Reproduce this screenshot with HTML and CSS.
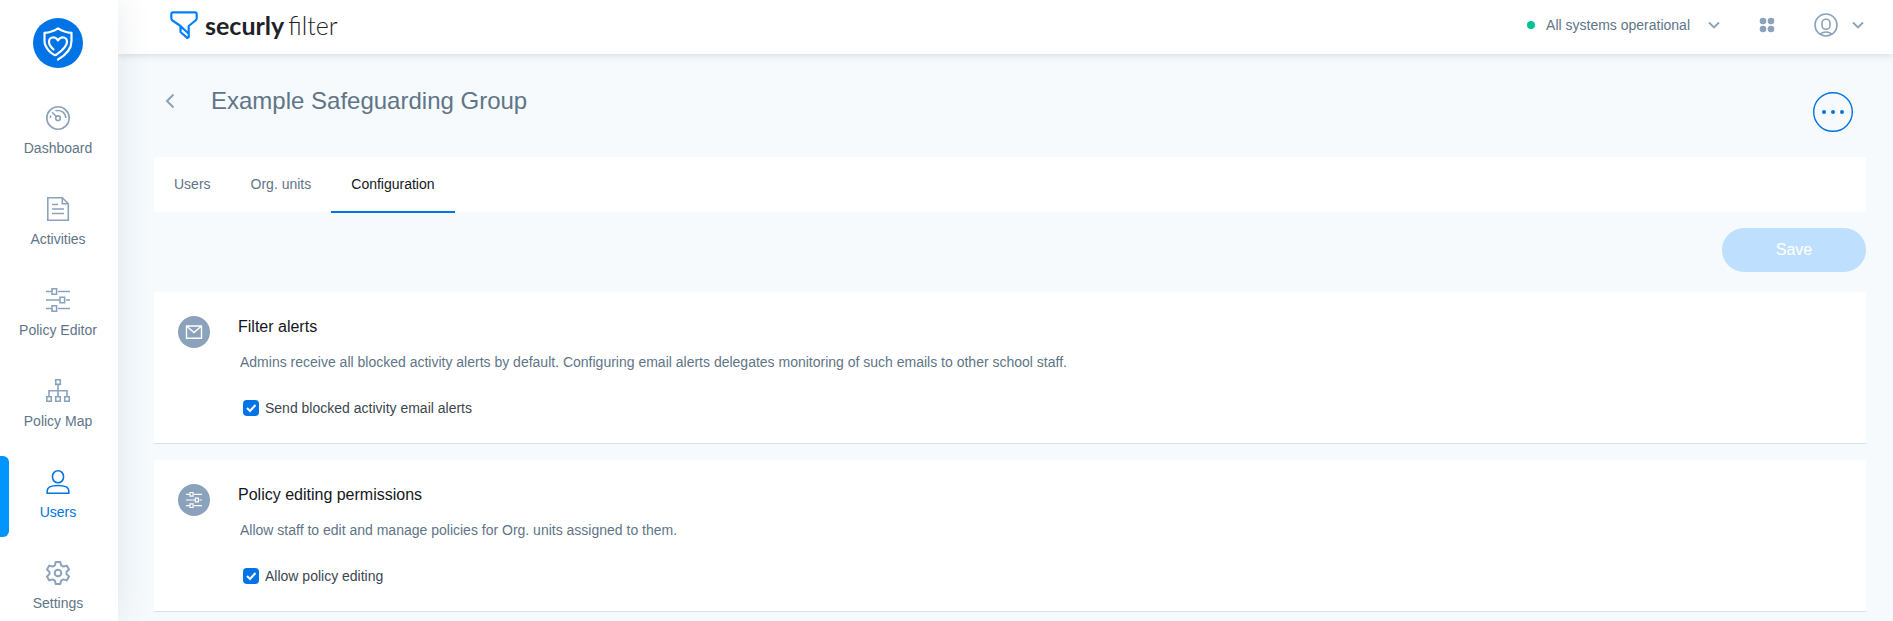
FILE: index.html
```html
<!DOCTYPE html>
<html lang="en">
<head>
    <meta charset="UTF-8">
    <meta name="viewport" content="width=device-width, initial-scale=1.0">
    <title>Securly Filter - Example Safeguarding Group</title>
    <link rel="stylesheet" href="styles.css">
</head>
<body>

    <svg class="symbols" aria-hidden="true">
        <symbol id="icon-sliders" viewBox="0 0 24 24">
            <path d="M0 3.5h5.5M12 3.5h12M0 12h13.5M20 12h4M0 20.5h5.5M12 20.5h12"/>
            <path d="M6 .7h4.600v5.600H6zM14 9.200h4.600v5.600H14zM6 17.700h4.600v5.600H6z"/>
        </symbol>
        <symbol id="icon-chevron" viewBox="0 0 12 8">
            <path d="M1 1.5l5 5 5-5"/>
        </symbol>
    </svg>

    <div class="app">
        <aside class="sidebar">
            <a href="#" class="brand" aria-label="Securly home">
                <svg width="50" height="50" viewBox="0 0 50 50">
                    <circle cx="25" cy="25" r="25" fill="#0073e6"/>
                    <g fill="none" stroke="#fff" stroke-width="2.2" stroke-linecap="round" stroke-linejoin="round">
                        <path d="M20.5 31.5c-2.600-2.300-4.500-4.600-4.500-7.700 0-2.800 1.900-4.500 4.200-4.500 2 0 3.600 1.100 4.800 3 1.200-1.900 2.800-3 4.800-3 2.300 0 4.200 1.700 4.200 4.500 0 5-5.500 9.200-9.800 12.400-.8.600-1.600 1-2.300 1-2-.9-10.400-6.500-10.400-14.200v-8.200c5-.3 9.500-1.900 13.500-4.500 4 2.600 8.500 4.200 13.500 4.500v8.200c0 8-6.500 14.500-13.500 18.500"/>
                    </g>
                </svg>
            </a>

            <nav class="menu">
                <a href="#" class="menu-item">
                    <svg class="icon" viewBox="0 0 24 24">
                        <circle cx="12" cy="12" r="11.2"/>
                        <circle cx="12" cy="12.200" r="2.300"/>
                        <path d="M10.300 10.500L6.200 6.300M9.500 4.800c5.500-1.400 10 2 10.300 7.200M4.300 12c0-1 .1-1.700.5-2.500"/>
                    </svg>
                    <span>Dashboard</span>
                </a>
                <a href="#" class="menu-item">
                    <svg class="icon" viewBox="0 0 24 24">
                        <path d="M1.800.8h14.500l6 6v16.400H1.800zM16.300.8v6h6M6 7.500h6M6 12h12M6 16.500h12"/>
                    </svg>
                    <span>Activities</span>
                </a>
                <a href="#" class="menu-item">
                    <svg class="icon"><use href="#icon-sliders"/></svg>
                    <span>Policy Editor</span>
                </a>
                <a href="#" class="menu-item">
                    <svg class="icon" viewBox="0 0 24 24">
                        <path d="M9.700.8h4.600v4.600H9.700zM.8 17.700h4.500v4.600H.8zM9.700 17.700h4.600v4.600H9.700zM18.700 17.700h4.500v4.600h-4.500z"/>
                        <path d="M12 5.300v12.400M3 17.500v-5.800h18v5.800"/>
                    </svg>
                    <span>Policy Map</span>
                </a>
                <a href="#" class="menu-item active">
                    <svg class="icon" viewBox="0 0 24 24">
                        <rect x="6.500" y=".8" width="11" height="12" rx="5.500"/>
                        <path d="M1.200 23.200v-2.500c0-3.500 4.500-5.200 10.800-5.200s10.800 1.700 10.800 5.200v2.500z"/>
                    </svg>
                    <span>Users</span>
                </a>
                <a href="#" class="menu-item">
                    <svg class="icon gear" viewBox="0 0 24 24">
                        <path d="M9.700 1h4.600l.8 3.300 2.300 1.300 3.300-1 2.300 4-2.500 2.300v2.200l2.500 2.300-2.300 4-3.300-1-2.300 1.300-.8 3.300H9.700l-.8-3.300-2.300-1.300-3.300 1-2.300-4 2.500-2.300v-2.200L1 8.600l2.300-4 3.300 1 2.300-1.300z"/>
                        <circle cx="12" cy="12" r="3.300"/>
                    </svg>
                    <span>Settings</span>
                </a>
            </nav>
        </aside>

        <div class="page">
            <header class="topbar">
                <a href="#" class="product">
                    <svg width="28" height="28" viewBox="0 0 28 28">
                        <path d="M3.200 1.300h21.600c1.200 0 1.900.7 1.900 1.900v4c0 1-.4 1.700-1.200 2.300l-6.800 5.500v11.200l-1.500.7-6.700-5.900v-6L2.500 9.500c-.8-.6-1.200-1.300-1.200-2.300v-4c0-1.200.7-1.900 1.900-1.900zM10.500 15l8.200 7.800"/>
                    </svg>
                    <span class="product-name">securly<span>filter</span></span>
                </a>
                <div class="tools">
                    <button type="button" class="status">
                        <span class="dot"></span>
                        All systems operational
                        <svg class="chevron"><use href="#icon-chevron"/></svg>
                    </button>
                    <button type="button" class="apps" aria-label="Apps">
                        <svg width="16" height="16" viewBox="0 0 16 16">
                            <circle cx="4" cy="4" r="3.300"/>
                            <circle cx="12" cy="4" r="3.300"/>
                            <circle cx="4" cy="12" r="3.300"/>
                            <circle cx="12" cy="12" r="3.300"/>
                        </svg>
                    </button>
                    <button type="button" class="account" aria-label="Account">
                        <svg class="icon" viewBox="0 0 24 24">
                            <circle cx="12" cy="12" r="11"/>
                            <rect x="8" y="6.300" width="8" height="10" rx="3.800"/>
                            <path d="M6.500 21.200c1-1.600 3-2.200 5.500-2.200s4.500.6 5.500 2.200"/>
                        </svg>
                        <svg class="chevron"><use href="#icon-chevron"/></svg>
                    </button>
                </div>
            </header>

            <main class="content">
                <div class="heading">
                    <a href="#" class="back" aria-label="Back">
                        <svg width="10" height="16" viewBox="0 0 10 16"><path d="M8.500 1.500L2 8l6.500 6.500"/></svg>
                    </a>
                    <h1>Example Safeguarding Group</h1>
                    <button type="button" class="more" aria-label="More actions">
                        <svg width="40" height="40" viewBox="0 0 40 40">
                            <circle class="ring" cx="20" cy="20" r="19.300"/>
                            <circle cx="11" cy="20" r="2"/>
                            <circle cx="20" cy="20" r="2"/>
                            <circle cx="29" cy="20" r="2"/>
                        </svg>
                    </button>
                </div>

                <nav class="tabs">
                    <a href="#" class="tab">Users</a>
                    <a href="#" class="tab">Org. units</a>
                    <a href="#" class="tab active">Configuration</a>
                </nav>

                <form class="settings">
                    <button type="submit" class="save" disabled>Save</button>

                    <section class="card">
                        <div class="card-icon">
                            <svg width="18" height="16" viewBox="0 0 18 16">
                                <path d="M1.500 2h15v12.200h-15zM1.500 2L9 8.500 16.500 2"/>
                            </svg>
                        </div>
                        <div class="card-body">
                            <h2>Filter alerts</h2>
                            <p>Admins receive all blocked activity alerts by default. Configuring email alerts delegates monitoring of such emails to other school staff.</p>
                            <div class="option">
                                <input type="checkbox" id="emailAlerts" checked>
                                <label for="emailAlerts">Send blocked activity email alerts</label>
                            </div>
                        </div>
                    </section>

                    <section class="card">
                        <div class="card-icon">
                            <svg class="small" width="16" height="16"><use href="#icon-sliders"/></svg>
                        </div>
                        <div class="card-body">
                            <h2>Policy editing permissions</h2>
                            <p>Allow staff to edit and manage policies for Org. units assigned to them.</p>
                            <div class="option">
                                <input type="checkbox" id="policyEditing" checked>
                                <label for="policyEditing">Allow policy editing</label>
                            </div>
                        </div>
                    </section>
                </form>
            </main>
        </div>
    </div>

</body>
</html>
```
FILE: styles.css
```css
* {
    box-sizing: border-box;
}
body {
    margin: 0;
    font-family: "Liberation Sans", Arial, sans-serif;
    font-size: 14px;
    line-height: 20px;
    color: #607587;
    background-color: #f6fafd;
}
a {
    color: inherit;
    text-decoration: none;
}
button {
    font: inherit;
    color: inherit;
    background: none;
    border: none;
    padding: 0;
    cursor: pointer;
}
svg {
    display: block;
    fill: none;
    stroke: #8ba2bc;
}
.symbols {
    display: none;
}
.icon {
    width: 24px;
    height: 24px;
    stroke-width: 1.6;
}
.app {
    display: flex;
    height: 100vh;
    overflow: hidden;
}

/* Sidebar */
.sidebar {
    position: relative;
    z-index: 1;
    flex: 0 0 118px;
    padding-top: 18px;
    background-color: #fff;
    box-shadow: 0 0 32px rgba(60, 80, 100, 0.12);
}
.brand {
    display: flex;
    justify-content: center;
    margin-bottom: 24px;
    padding-right: 2px;
}
.brand svg {
    stroke: none;
}
.menu {
    display: flex;
    flex-direction: column;
    gap: 10px;
}
.menu-item {
    position: relative;
    display: flex;
    flex-direction: column;
    align-items: center;
    gap: 8px;
    padding: 14px 2px 15px 0;
}
.menu-item.active {
    color: #0073e6;
}
.menu-item.active svg {
    stroke: #0073e6;
}
.menu-item.active::before {
    content: "";
    position: absolute;
    left: 0;
    top: 0;
    bottom: 0;
    width: 9px;
    border-radius: 0 6px 6px 0;
    background-color: #0095ff;
}
.gear {
    stroke-width: 2;
    stroke-linejoin: round;
}

/* Top bar */
.page {
    flex: 1;
    min-width: 0;
    overflow-y: auto;
}
.topbar {
    display: flex;
    justify-content: space-between;
    align-items: center;
    height: 54px;
    padding: 0 29px 4px 52px;
    background-color: #fff;
    box-shadow: 0 0 8px rgba(60, 80, 100, 0.24);
}
.product {
    display: flex;
    align-items: center;
    gap: 7px;
}
.product svg {
    stroke: #0080ff;
    stroke-width: 2.2;
    stroke-linejoin: round;
}
.product-name {
    font-family: Lato, sans-serif;
    font-size: 25px;
    line-height: 28px;
    font-weight: 700;
    color: #1e2328;
}
.product-name span {
    margin-left: 4px;
    font-weight: 300;
}
.tools, .status, .account {
    display: flex;
    align-items: center;
}
.tools {
    gap: 39px;
}
.dot {
    width: 8px;
    height: 8px;
    margin-right: 11px;
    border-radius: 50%;
    background-color: #00c295;
}
.chevron {
    width: 12px;
    height: 8px;
    stroke-width: 1.8;
}
.status .chevron {
    margin-left: 18px;
}
.apps svg {
    fill: #8ba2bc;
    stroke: none;
}
.account {
    gap: 14px;
}

/* Content */
.content {
    padding: 0 27px 0 36px;
}
.heading {
    display: flex;
    align-items: flex-start;
    height: 103px;
    padding: 33px 13px 0 11px;
}
.back {
    padding: 6px 0;
}
.back svg {
    stroke-width: 2;
}
h1 {
    flex: 1;
    margin: 0 0 0 36px;
    font-size: 24px;
    line-height: 28px;
    font-weight: 400;
}
.more {
    margin-top: 5px;
    border-radius: 50%;
}
.more svg {
    fill: #0073e6;
    stroke: none;
}
.more .ring {
    fill: none;
    stroke: #0073e6;
    stroke-width: 1.4;
}
.tabs {
    display: flex;
    height: 55px;
    border-radius: 4px;
    background-color: #fff;
}
.tab {
    height: 56px;
    padding: 17px 20px;
}
.tab.active {
    color: #13171c;
    border-bottom: 2px solid #0073e6;
}
.settings {
    display: flex;
    flex-direction: column;
    gap: 16px;
    padding-top: 16px;
}
.save {
    align-self: flex-end;
    width: 144px;
    height: 44px;
    margin-bottom: 4px;
    font-size: 16px;
    color: #fff;
    border-radius: 22px;
    background-color: #bfdfff;
}
.card {
    display: flex;
    gap: 28px;
    padding: 24px 24px 25px;
    background-color: #fff;
    border-bottom: 1px solid #cfe0ef;
}
.card-icon {
    display: flex;
    align-items: center;
    justify-content: center;
    width: 32px;
    height: 32px;
    border-radius: 50%;
    background-color: #8ba2bc;
}
.card-icon svg {
    stroke: #fff;
    stroke-width: 1.4;
}
.card-icon .small {
    stroke-width: 1.8;
}
h2 {
    margin: 1px 0 15px;
    font-size: 16px;
    line-height: 20px;
    font-weight: 400;
    color: #13171c;
}
.card p {
    margin: 0 0 26px;
    padding-left: 2px;
}
.option {
    display: flex;
    align-items: center;
    gap: 6px;
    padding-left: 5px;
    color: #3c4650;
}
.option input {
    appearance: none;
    width: 16px;
    height: 16px;
    margin: 0;
    border-radius: 4px;
    background: #0073e6 url("data:image/svg+xml,%3Csvg xmlns='http://www.w3.org/2000/svg' viewBox='0 0 16 16'%3E%3Cpath d='M4 8l3 3 5.500-6' fill='none' stroke='white' stroke-width='2'/%3E%3C/svg%3E");
}
.option input:not(:checked) {
    border: 1px solid #8ba2bc;
    background: #fff;
}
```
